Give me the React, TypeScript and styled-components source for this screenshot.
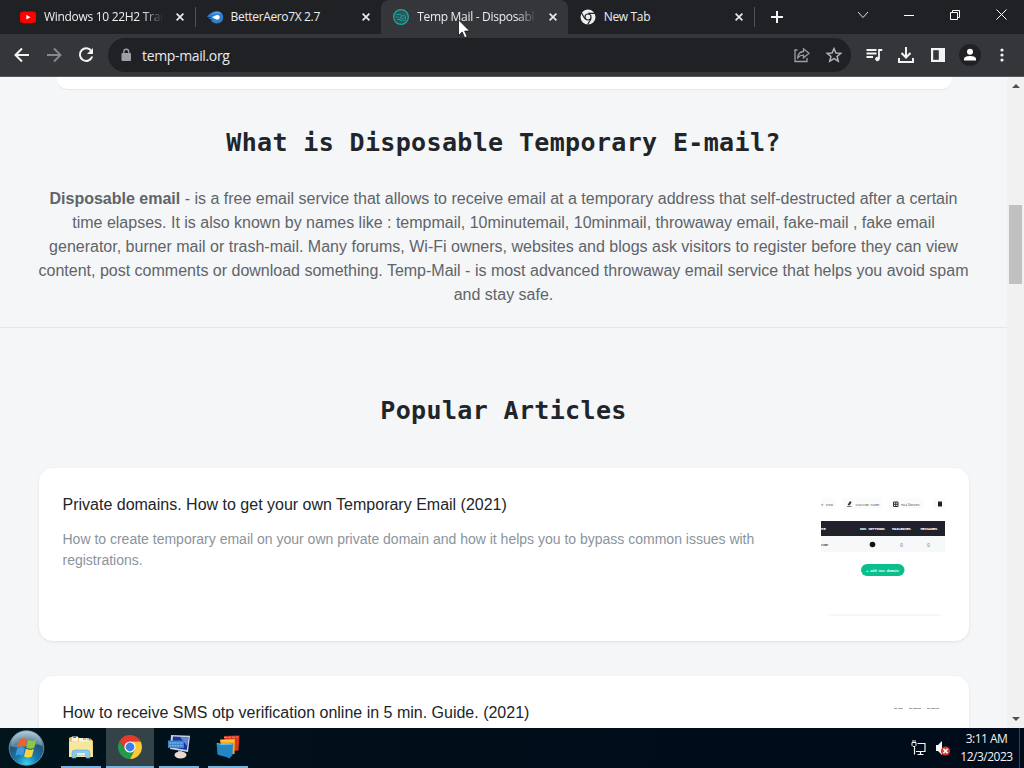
import React from "react";
import styled, { createGlobalStyle } from "styled-components";

const GlobalStyle = createGlobalStyle`
  * { box-sizing: border-box; }
  body { margin: 0; overflow: hidden; }
  h1, h2, h3, p { margin: 0; }
  svg { display: block; flex: none; }
`;

const Screen = styled.div`
  display: flex;
  flex-direction: column;
  width: 1024px;
  height: 768px;
  overflow: hidden;
  font-family: "Liberation Sans", Arial, sans-serif;
`;

/* ---------- browser frame ---------- */
const TabStrip = styled.div`
  display: flex;
  flex: none;
  height: 34px;
  padding-left: 8px;
  background: #202124;
`;
const Tab = styled.div<{ $active?: boolean }>`
  display: flex;
  align-items: center;
  justify-content: space-between;
  flex: none;
  width: 186.6px;
  height: 34px;
  padding: 0 11px 0 12px;
  border-radius: 8px 8px 0 0;
  background: ${(p) => (p.$active ? "#35363a" : "transparent")};
`;
const TabTitle = styled.span<{ $spacing: number; $fade?: boolean }>`
  width: 118px;
  margin: 0 auto 0 8px;
  overflow: hidden;
  white-space: nowrap;
  color: #eceef0;
  font: 12px/18px "Open Sans", sans-serif;
  letter-spacing: ${(p) => p.$spacing}px;
  ${(p) => p.$fade && "mask-image: linear-gradient(90deg, #000 84%, transparent 101%);"}
`;
const TabDivider = styled.span<{ $hidden?: boolean }>`
  align-self: center;
  width: 1px;
  height: 20px;
  margin: 0 -1px 0 0;
  background: ${(p) => (p.$hidden ? "transparent" : "#505256")};
`;
const NewTab = styled.div`
  display: flex;
  align-items: center;
  margin-left: 16.6px;
`;
const WindowButtons = styled.div`
  display: flex;
  align-items: center;
  height: 29px;
  margin-left: auto;
`;
const WindowButton = styled.div`
  display: flex;
  justify-content: center;
  width: 46px;
`;

const Toolbar = styled.div`
  display: flex;
  align-items: center;
  flex: none;
  height: 43px;
  padding: 0 12px 0 13px;
  background: #35363a;
  border-bottom: 1px solid #57585b;
`;
const NavIcons = styled.div`
  display: flex;
  gap: 14px;
  width: 95px;
`;
const AddressBar = styled.div`
  display: flex;
  align-items: center;
  width: 743px;
  height: 34px;
  padding: 0 8px 0 11px;
  border-radius: 17px;
  background: #202124;
`;
const Address = styled.span`
  flex: 1;
  margin-left: 9px;
  padding-top: 1px;
  color: #e8eaed;
  font: 14px/20px "Open Sans", sans-serif;
  letter-spacing: -0.35px;
`;
const ToolIcons = styled.div`
  display: flex;
  align-items: center;
  gap: 14px;
  margin-left: 14px;
`;
const AddressIcons = styled.div`
  display: flex;
  gap: 14px;
`;
const Avatar = styled.div`
  display: grid;
  place-items: center;
  width: 22px;
  height: 22px;
  margin: 0 -2px;
  border-radius: 50%;
  background: #202124;
`;

/* ---------- page ---------- */
const Viewport = styled.div`
  display: flex;
  flex: none;
  height: 651px;
  overflow: hidden;
`;
const Page = styled.main`
  display: flex;
  flex-direction: column;
  align-items: center;
  width: 1007px;
  height: 651px;
  overflow: hidden;
  background: #f5f6f8;
`;
const PanelEnd = styled.div`
  flex: none;
  width: 895px;
  height: 12px;
  margin-left: 2px;
  border-radius: 0 0 10px 10px;
  background: #fff;
  box-shadow: 0 1px 1px rgba(0, 0, 0, 0.06);
`;
const Intro = styled.section`
  flex: none;
  width: 100%;
  height: 239px;
  padding-top: 36px;
  border-bottom: 1px solid #e4e7ea;
`;
const Heading = styled.h2`
  color: #212529;
  font: bold 25px/36px "DejaVu Sans Mono", monospace;
  letter-spacing: 0.35px;
  text-align: center;
  white-space: pre;
`;
const IntroText = styled.p`
  margin-top: 26px;
  color: #5f6468;
  font-size: 16px;
  line-height: 24px;
  text-align: center;
  white-space: nowrap;
`;
const Articles = styled.section`
  display: flex;
  flex-direction: column;
  flex: none;
  gap: 39px;
  width: 930px;
  padding-top: 65px;
`;
const CardList = styled.div`
  display: flex;
  flex-direction: column;
  gap: 35px;
`;
const Card = styled.article`
  display: flex;
  justify-content: space-between;
  height: 173px;
  padding: 24px 24px 0;
  border-radius: 14px;
  background: #fff;
  box-shadow: 0 1px 3px rgba(0, 0, 0, 0.09);
`;
const CardTitle = styled.h3`
  padding-top: 1px;
  color: #212529;
  font-size: 16px;
  font-weight: 400;
  line-height: 24px;
`;
const CardText = styled.p`
  width: 710px;
  margin-top: 12px;
  color: #8a949c;
  font-size: 14px;
  line-height: 21px;
`;

const Scrollbar = styled.div`
  display: flex;
  flex-direction: column;
  align-items: center;
  width: 17px;
  background: #f1f1f1;
`;
const ScrollThumb = styled.div`
  width: 13px;
  height: 79px;
  margin: 111px 0 auto 0;
  background: #c1c1c1;
`;
const ScrollArrow = styled.div<{ $down?: boolean }>`
  display: grid;
  place-items: center;
  height: 17px;
  transform: ${(p) => (p.$down ? "rotate(180deg)" : "none")};
`;

/* ---------- taskbar ---------- */
const Taskbar = styled.footer`
  display: flex;
  flex: none;
  height: 40px;
  padding-left: 8px;
  background: linear-gradient(90deg, #02141b, #010d19 50%, #000b1b);
`;
const StartButton = styled.div`
  width: 53px;
  padding-top: 2px;
`;
const TaskItem = styled.div<{ $width: number; $gap: number; $active?: boolean }>`
  display: grid;
  place-items: center;
  width: ${(p) => p.$width}px;
  margin-right: ${(p) => p.$gap}px;
  border-bottom: 2px solid #79b3dc;
  background: ${(p) => (p.$active ? "#334347" : "transparent")};
`;
const Tray = styled.div`
  display: flex;
  align-items: center;
  gap: 7px;
  margin-left: auto;
`;
const TrayIcons = styled.div`
  display: flex;
  gap: 8px;
  margin-right: 1px;
`;
const Clock = styled.div`
  width: 61px;
  margin: 0 -5px 0 -3px;
  color: #f1f3f5;
  font: 12px/18px "Open Sans", sans-serif;
  letter-spacing: -0.5px;
  text-align: center;
  white-space: nowrap;
`;
const ShowDesktop = styled.div`
  width: 5px;
  height: 40px;
  border-left: 1px solid #35424f;
`;

const Pointer = styled.div`
  position: absolute;
  left: 458px;
  top: 19px;
`;

const CloseIcon = () => (
  <svg width="8" height="8" viewBox="0 0 8 8" stroke="#e8eaed" strokeWidth="1.7">
    <path d="M.6.6l6.8 6.8M7.4.6L.6 7.4" />
  </svg>
);

const YoutubeIcon = () => (
  <svg width="16" height="16" viewBox="0 0 16 16">
    <rect y="2.5" width="16" height="11.5" rx="3" fill="#f00" />
    <path d="M6.3 5.8v4.8l4.2-2.4z" fill="#fff" />
  </svg>
);

const AeroIcon = () => (
  <svg width="16" height="16" viewBox="0 0 16 16">
    <path d="M0 8C2 5 6 2 10 2a6 6 0 010 12.5C7 14.5 5 13 3.5 11.5L6 11 1 9.6 5 8.4z" fill="#2f7fd0" />
    <path d="M4 5.5C7 2.5 12 2 14 5c-4-1-7-.5-10 .5z" fill="#5ba8e8" />
    <path d="M5 8.2l4-2a2.6 2.3 0 11.2 4.200z" fill="#fff" />
  </svg>
);

const TempMailIcon = () => (
  <svg width="16" height="16" viewBox="0 0 16 16" fill="none" stroke="#1eaaa0">
    <circle cx="8" cy="8" r="7.4" fill="#28555a" strokeWidth="1.2" />
    <path d="M3 5.5h4M2.6 8h3M4 10.5h3M8 4.5v3l4.5-1.8M7 8.5v2.8h5.5V7.6L9.5 9.5z" strokeWidth=".8" />
  </svg>
);

const WhiteChromeIcon = () => (
  <svg width="16" height="16" viewBox="0 0 16 16">
    <circle cx="8" cy="8" r="7.5" fill="#eceef0" />
    <circle cx="8" cy="8" r="3.6" fill="#202124" />
    <circle cx="8" cy="8" r="2.4" fill="#eceef0" />
    <path d="M8 4.4h7M4.9 9.8L1.4 3.7M11.1 9.8L7.6 15.5" stroke="#202124" strokeWidth="1.2" />
  </svg>
);

const ChromeIcon = () => (
  <svg width="24" height="24" viewBox="0 0 24 24">
    <path d="M1.61 6L7.2 14.8 12 6.5h10.64A12 12 0 001.61 6z" fill="#e33b2e" />
    <path d="M1.61 6A12 12 0 0012 24l4.850-9.2H7.15z" fill="#249a48" />
    <path d="M12 6.5h10.64A12 12 0 0112 24l4.8-9.2z" fill="#fcc934" />
    <circle cx="12" cy="12" r="5.6" fill="#fff" />
    <circle cx="12" cy="12" r="4.4" fill="#3b7ded" />
  </svg>
);

const StartOrb = () => (
  <svg width="37" height="37" viewBox="0 0 37 37">
    <defs>
      <radialGradient id="orb" cx=".5" cy=".95" r=".9">
        <stop offset="0" stopColor="#35d5f5" />
        <stop offset=".35" stopColor="#1679ad" />
        <stop offset=".7" stopColor="#23557a" />
        <stop offset="1" stopColor="#9fb9c8" />
      </radialGradient>
    </defs>
    <circle cx="18.5" cy="18" r="17.3" fill="url(#orb)" stroke="#6c9db5" strokeWidth=".8" />
    <path d="M3 16A15.5 15 0 0134 16C26 11 12 21 3 16z" fill="#c4d7df" opacity=".35" />
    <path d="M11.5 9.5c3-2 5-1.5 7.5-.2L17.2 17c-2.5-1.3-4.8-1.5-7.700.2z" fill="#ee632c" />
    <path d="M20 9.8c3 1.5 5 1.5 8.3 0l-2 8c-3 1.5-5.3 1.3-8.1-.2z" fill="#8dc63f" />
    <path d="M9.2 18.3c3-1.7 5-1.5 7.7-.1L15 25.8c-2.6-1.3-4.7-1.5-7.600.1z" fill="#3c9be0" />
    <path d="M17.9 18.8c2.9 1.4 5 1.5 8 .1l-2 7.7c-2.9 1.5-5.2 1.3-7.9-.1z" fill="#fdd23e" />
  </svg>
);

const FolderIcon = () => (
  <svg width="26" height="24" viewBox="0 0 26 24">
    <path d="M1 3l2-1h7l2 2h11l2 2v16H1z" fill="#e8c966" />
    <path d="M4 1.5h6v5H4zM11 3h10v4H11z" fill="#f8f5e4" />
    <path d="M5 2.5h3M15 4h3" stroke="#c9583b" />
    <path d="M19 4h4" stroke="#5f9e43" />
    <path d="M1 7l23-1 1 16H1z" fill="#f7e79e" />
    <path d="M4 23v-5q0-3 3-3h12q3 0 3 3v5h-4v-3H8v3z" fill="#8bcaea" stroke="#5ba5cf" strokeWidth=".6" />
    <path d="M9 19h8" stroke="#d7eff9" strokeWidth="2" />
  </svg>
);

const RemoteIcon = () => (
  <svg width="24" height="24" viewBox="0 0 24 24">
    <path d="M4 0l19 .8L21 17 3 14z" fill="#c9d3e2" />
    <path d="M6 1.5l15.500.8L19.800 15 5 12.500z" fill="#1834a5" />
    <path d="M13 2l8.500.3-1.200 9z" fill="#6587d4" />
    <path d="M11 15.500l4 .7 1 2.800h-5z" fill="#a3acbc" />
    <ellipse cx="13.500" cy="20" rx="6" ry="3.400" fill="#ead8d3" />
    <path d="M1 5.500h16V13H1z" fill="#3b83c7" />
    <path d="M2 8h14M2 10.800h14" stroke="#b9d6ee" strokeWidth=".8" strokeDasharray="2 .7" />
  </svg>
);

const StackIcon = () => (
  <svg width="24" height="24" viewBox="0 0 24 24">
    <path d="M8 1l15.500-.5-1 15-12 1z" fill="#d63920" />
    <path d="M8 2.500l14-.5" stroke="#f58870" strokeDasharray="3 1" />
    <path d="M4 4.500l15-.5-.5 15-13 .5z" fill="#f5a916" />
    <path d="M5 6h13" stroke="#ffe171" />
    <path d="M.5 8c5 1.500 10 1.500 16.500.5L16.500 20l-3 3.500C9 21 5 21 1.500 19.500z" fill="#2286c4" />
    <path d="M1 8.500c5 1.500 10 1.500 15.500.5" stroke="#73bee9" fill="none" />
  </svg>
);

const DomainsThumb = () => (
  <svg width="124" height="149" viewBox="0 0 124 149" fontFamily="Liberation Mono, monospace">
    <path d="M0 6h15v11H0zM22 6h39v11H22zM68 6h35v11H68zM112 6h12v11h-12z" fill="#fafbfb" />
    <g fontSize="4" fill="#62666c">
      <text x="0" y="13.5">e new</text>
      <text x="34.5" y="13.5" textLength="24">Custom name</text>
      <text x="80" y="13.5" textLength="19">Mailboxes</text>
    </g>
    <path d="M26 14.500h4.500M27 13l2-3.500 1.200.8-1.700 2.700z" stroke="#222" strokeWidth=".6" fill="#222" />
    <path d="M72.500 10h4.500v4.500h-4.500zM74.750 10v4.500M72.500 12.250H77" stroke="#333" fill="none" />
    <rect x="117" y="9.5" width="4" height="5" fill="#222" />
    <rect y="29" width="124" height="15" fill="#20212b" />
    <g fontSize="4" fontWeight="bold" fill="#fff">
      <text x="0" y="38">ME</text>
      <text x="39" y="38" textLength="25">DNS SETTINGS</text>
      <text x="71" y="38" textLength="19">MAILBOXES</text>
      <text x="99.5" y="38" textLength="17">MESSAGES</text>
    </g>
    <rect y="44" width="124" height="16" fill="#f7f8f9" />
    <text x="0" y="54" fontSize="4" fill="#333" textLength="7.5">name</text>
    <circle cx="51.5" cy="52.5" r="2.8" fill="#111" />
    <g fontSize="5" fill="#85898e">
      <text x="79" y="54.5">0</text>
      <text x="106" y="54.5">0</text>
    </g>
    <rect x="40" y="72" width="43.5" height="12" rx="6" fill="#0abf8c" />
    <text x="45" y="79.5" fontSize="4" fontWeight="bold" fill="#d4fff2" textLength="33">+ Add new domain</text>
    <path d="M8 123h111" stroke="#eceef0" />
  </svg>
);

const SmsThumb = () => (
  <svg width="124" height="149" viewBox="0 0 124 149">
    <path d="M73 8.5h9M88 8.5h12M106 8.5h13" stroke="#9fa3a8" strokeDasharray="3 .8 5 .4" />
  </svg>
);

const tabs = [
  { title: "Windows 10 22H2 Transformation", icon: <YoutubeIcon />, spacing: -0.3, fade: true },
  { title: "BetterAero7X 2.7", icon: <AeroIcon />, spacing: -0.35, divider: true },
  { title: "Temp Mail - Disposable Temporary", icon: <TempMailIcon />, spacing: -0.3, fade: true, active: true },
  { title: "New Tab", icon: <WhiteChromeIcon />, spacing: -0.35 },
];

function Browser() {
  return (
    <>
      <TabStrip>
        {tabs.map((tab) => (
          <React.Fragment key={tab.title}>
            <TabDivider $hidden={!tab.divider} />
            <Tab $active={tab.active}>
              {tab.icon}
              <TabTitle $spacing={tab.spacing} $fade={tab.fade}>{tab.title}</TabTitle>
              <CloseIcon />
            </Tab>
          </React.Fragment>
        ))}
        <TabDivider />
        <NewTab>
          <svg width="12" height="12" viewBox="0 0 12 12" stroke="#f1f3f4" strokeWidth="2">
            <path d="M6 0v12M0 6h12" />
          </svg>
        </NewTab>
        <WindowButtons>
          <WindowButton>
            <svg width="12" height="8" viewBox="0 0 12 8" fill="none" stroke="#dfe1e3">
              <path d="M1 1l5 5.500L11 1" />
            </svg>
          </WindowButton>
          <WindowButton>
            <svg width="10" height="10" viewBox="0 0 10 10" stroke="#fff"><path d="M0 5.500h10" /></svg>
          </WindowButton>
          <WindowButton>
            <svg width="10" height="10" viewBox="0 0 10 10" fill="none" stroke="#fff">
              <path d="M.5 2.500h7v7h-7zM2.500 2.500v-2h7v7h-2" />
            </svg>
          </WindowButton>
          <WindowButton>
            <svg width="11" height="11" viewBox="0 0 11 11" stroke="#fff"><path d="M.5.5l10 10M10.500.5l-10 10" /></svg>
          </WindowButton>
        </WindowButtons>
      </TabStrip>
      <Toolbar>
        <NavIcons>
          <svg width="18" height="18" viewBox="0 0 18 18" fill="none" stroke="#f1f3f4" strokeWidth="2">
            <path d="M16 9H3M9 2.500L2.500 9 9 15.500" />
          </svg>
          <svg width="18" height="18" viewBox="0 0 18 18" fill="none" stroke="#86888b" strokeWidth="1.9">
            <path d="M2 9h13M9 2.500L15.500 9 9 15.500" />
          </svg>
          <svg width="18" height="18" viewBox="0 0 18 18" fill="none" stroke="#f1f3f4" strokeWidth="2">
            <path d="M14.500 5.200A6.300 6.300 0 1015.200 10.500" />
            <path d="M16 2v6h-6z" fill="#f1f3f4" stroke="none" />
          </svg>
        </NavIcons>
        <AddressBar>
          <svg width="14" height="14" viewBox="0 0 14 14">
            <path d="M3 5.500h8.500v7H3z" fill="#9aa0a6" stroke="#9aa0a6" strokeLinejoin="round" />
            <path d="M4.800 5.500V3.700a2.400 2.400 0 014.900 0v1.800" fill="none" stroke="#9aa0a6" strokeWidth="1.3" />
          </svg>
          <Address>temp-mail.org</Address>
          <AddressIcons>
            <svg width="18" height="18" viewBox="0 0 18 18" fill="none" stroke="#9ba0a5" strokeWidth="1.3">
              <path d="M4.500 4H2v11.500h12V12" />
              <path d="M4.700 11.700C5 8 7 5.800 10.500 5.500V2.800L16 7.300l-5.500 4.500V9.200C8 9.100 6.200 10 4.700 11.700z" />
            </svg>
            <svg width="18" height="18" viewBox="0 0 18 18" fill="none" stroke="#afb3b7" strokeWidth="1.5">
              <path d="M9 2.500l1.950 4.450 4.850.4-3.700 3.150 1.150 4.700L9 12.700l-4.250 2.500 1.150-4.700-3.700-3.150 4.850-.4z" />
            </svg>
          </AddressIcons>
        </AddressBar>
        <ToolIcons>
          <svg width="18" height="18" viewBox="0 0 18 18" fill="none" stroke="#f1f3f4" strokeWidth="1.8">
            <path d="M1.500 4h10M1.500 7.500h10M1.500 11H8M14 13V4h3.300" />
            <circle cx="12.4" cy="13" r="1.8" fill="#f1f3f4" strokeWidth="1" />
          </svg>
          <svg width="18" height="18" viewBox="0 0 18 18" fill="none" stroke="#f1f3f4" strokeWidth="2">
            <path d="M9 1v10M4.500 7L9 11.500 13.500 7M2 12v4h14v-4" />
          </svg>
          <svg width="18" height="18" viewBox="0 0 18 18">
            <path d="M2 2h14v14H2z" fill="#f1f3f4" />
            <path d="M4.200 4.200h5.600v9.600H4.200z" fill="#35363a" />
          </svg>
          <Avatar>
            <svg width="14" height="14" viewBox="0 0 14 14" fill="#fff">
              <circle cx="7" cy="3.8" r="3" />
              <path d="M1 12.500v-1.700C1 8.700 5 8 7 8s6 .7 6 2.800v1.700z" />
            </svg>
          </Avatar>
          <svg width="18" height="18" viewBox="0 0 18 18" fill="#f1f3f4">
            <circle cx="9" cy="4" r="1.6" />
            <circle cx="9" cy="9" r="1.6" />
            <circle cx="9" cy="14" r="1.6" />
          </svg>
        </ToolIcons>
      </Toolbar>
    </>
  );
}

function Content() {
  return (
    <Viewport>
      <Page>
        <PanelEnd />
        <Intro>
          <Heading>What is Disposable Temporary E-mail?</Heading>
          <IntroText>
            <b>Disposable email</b> - is a free email service that allows to receive email at a temporary address that self-destructed after a certain
            <br />
            time elapses. It is also known by names like : tempmail, 10minutemail, 10minmail, throwaway email, fake-mail , fake email
            <br />
            generator, burner mail or trash-mail. Many forums, Wi-Fi owners, websites and blogs ask visitors to register before they can view
            <br />
            content, post comments or download something. Temp-Mail - is most advanced throwaway email service that helps you avoid spam
            <br />
            and stay safe.
          </IntroText>
        </Intro>
        <Articles>
          <Heading>Popular Articles</Heading>
          <CardList>
            <Card>
              <div>
                <CardTitle>Private domains. How to get your own Temporary Email (2021)</CardTitle>
                <CardText>
                  How to create temporary email on your own private domain and how it helps you to bypass common issues with registrations.
                </CardText>
              </div>
              <DomainsThumb />
            </Card>
            <Card>
              <CardTitle>How to receive SMS otp verification online in 5 min. Guide. (2021)</CardTitle>
              <SmsThumb />
            </Card>
          </CardList>
        </Articles>
      </Page>
      <Scrollbar>
        <ScrollArrow>
          <svg width="8" height="4" viewBox="0 0 8 4"><path d="M0 4l4-4 4 4z" fill="#505050" /></svg>
        </ScrollArrow>
        <ScrollThumb />
        <ScrollArrow $down>
          <svg width="8" height="4" viewBox="0 0 8 4"><path d="M0 4l4-4 4 4z" fill="#505050" /></svg>
        </ScrollArrow>
      </Scrollbar>
    </Viewport>
  );
}

export default function App() {
  return (
    <Screen>
      <GlobalStyle />
      <Browser />
      <Content />
      <Taskbar>
        <StartButton><StartOrb /></StartButton>
        <TaskItem $width={40} $gap={5}><FolderIcon /></TaskItem>
        <TaskItem $width={48} $gap={5} $active><ChromeIcon /></TaskItem>
        <TaskItem $width={40} $gap={9}><RemoteIcon /></TaskItem>
        <TaskItem $width={40} $gap={0}><StackIcon /></TaskItem>
        <Tray>
          <TrayIcons>
            <svg width="16" height="16" viewBox="0 0 16 16" fill="none" stroke="#f4f4f4">
              <path d="M6.500 3.500h7.500v8H5M9.500 11.500v3M3.500 8v6.500M6.500 14.500h6" strokeWidth="1.2" />
              <path d="M1 2.500h4v3l-1 1H2l-1-1zM2 0v3M4 0v3M3.500 6v3" />
            </svg>
            <svg width="16" height="16" viewBox="0 0 16 16">
              <path d="M1 5h2l4-4v14l-4-4H1z" fill="#f7f7f7" />
              <circle cx="10.5" cy="11" r="4.6" fill="#d9352a" />
              <path d="M8.400 8.900l4.200 4.200M12.600 8.900l-4.200 4.200" stroke="#fff" strokeWidth="1.5" />
            </svg>
          </TrayIcons>
          <Clock>
            3:11 AM
            <br />
            12/3/2023
          </Clock>
          <ShowDesktop />
        </Tray>
      </Taskbar>
      <Pointer>
        <svg width="13" height="20" viewBox="0 0 13 20">
          <path d="M.5.8v15.700l3.700-3.500 2.500 5.700 2.500-1.100-2.500-5.500h5z" fill="#fff" stroke="#111" strokeWidth=".8" />
        </svg>
      </Pointer>
    </Screen>
  );
}
